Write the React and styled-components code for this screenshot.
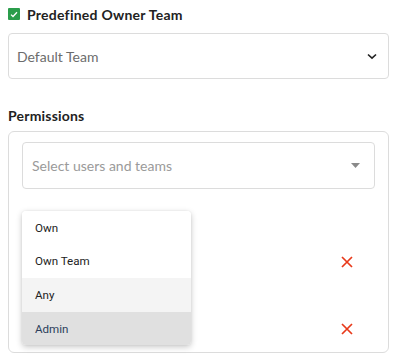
import React from 'react'
import styled, { createGlobalStyle } from 'styled-components'

const GlobalStyle = createGlobalStyle`
  body {
    margin: 0;
    background: #fff;
    font-family: Lato, "Open Sans", sans-serif;
    color: #222;
  }
`

const Page = styled.div`
  padding: 8px 6px 8px 8px;
  width: 381px;
`

const CheckRow = styled.label`
  display: flex;
  align-items: center;
  gap: 7px;
  height: 12px;
  font-size: 14px;
  font-weight: 700;
  letter-spacing: 0.25px;
  color: #222;
`

const Box = styled.span`
  flex: 0 0 12px;
  width: 12px;
  height: 12px;
  border-radius: 1px;
  background: #2a9d4b;
  display: flex;
  align-items: center;
  justify-content: center;
`

const Select = styled.div`
  display: flex;
  align-items: center;
  justify-content: space-between;
  height: ${p => (p.caret ? 45 : 44)}px;
  border: 1px solid #dcdcdc;
  border-radius: 4px;
  padding: 0 ${p => (p.caret ? 14 : 11)}px 0 ${p => (p.caret ? 9 : 8)}px;
  margin-top: ${p => p.top || 0}px;
  font-size: 14px;
  color: ${p => (p.placeholder ? '#9a9a9a' : '#6c6c6c')};
`

const Heading = styled.div`
  margin-top: 29px;
  font-size: 14px;
  font-weight: 700;
  line-height: 16px;
  letter-spacing: 0.2px;
`

const Panel = styled.div`
  position: relative;
  box-sizing: border-box;
  margin-top: 7px;
  height: 222px;
  border: 1px solid #dcdcdc;
  border-radius: 6px;
  padding: 10px 13px 0 13px;
`

const Rows = styled.div`
  display: flex;
  flex-direction: column;
  gap: 56px;
  margin-top: 67px;
  padding-right: 22px;
`

const Row = styled.div`
  display: flex;
  justify-content: flex-end;
  height: 11px;
`

const Menu = styled.ul`
  position: absolute;
  left: 13px;
  top: 79px;
  width: 169px;
  margin: 0;
  padding: 0;
  list-style: none;
  background: #fff;
  border-radius: 4px;
  box-shadow: 0 2px 6px rgba(0, 0, 0, 0.22), 0 0 2px rgba(0, 0, 0, 0.08);
  overflow: hidden;
  font-family: Roboto, "Liberation Sans", sans-serif;
  font-size: 11.6px;
`

const Item = styled.li`
  height: 33.6px;
  display: flex;
  align-items: center;
  padding-left: 13px;
  color: ${p => (p.selected ? '#2c3e5c' : '#222')};
  background: ${p => (p.selected ? '#e0e0e0' : p.hover ? '#f4f4f4' : '#fff')};
`

const Cross = () => (
  <svg width="12" height="12" viewBox="0 0 12 12">
    <path d="M1 1L11 11M11 1L1 11" stroke="#e8391a" strokeWidth="1.7" />
  </svg>
)

export default function App() {
  return (
    <Page>
      <GlobalStyle />
      <CheckRow>
        <Box>
          <svg width="8" height="7" viewBox="0 0 8 7">
            <path d="M1 3.6L3 5.5L7 1.2" stroke="#fff" strokeWidth="1.3" fill="none" />
          </svg>
        </Box>
        Predefined Owner Team
      </CheckRow>
      <Select top={13}>
        Default Team
        <svg width="10" height="7" viewBox="0 0 10 7">
          <path d="M1 1.5L5 5.2L9 1.5" stroke="#222" strokeWidth="1.6" fill="none" />
        </svg>
      </Select>
      <Heading>Permissions</Heading>
      <Panel>
        <Select caret placeholder="1">
          Select users and teams
          <svg width="9" height="5" viewBox="0 0 9 5">
            <path d="M0 0H9L4.5 5Z" fill="#8a8a8a" />
          </svg>
        </Select>
        <Rows>
          <Row><Cross /></Row>
          <Row><Cross /></Row>
        </Rows>
        <Menu>
          <Item>Own</Item>
          <Item>Own Team</Item>
          <Item hover>Any</Item>
          <Item selected>Admin</Item>
        </Menu>
      </Panel>
    </Page>
  )
}
